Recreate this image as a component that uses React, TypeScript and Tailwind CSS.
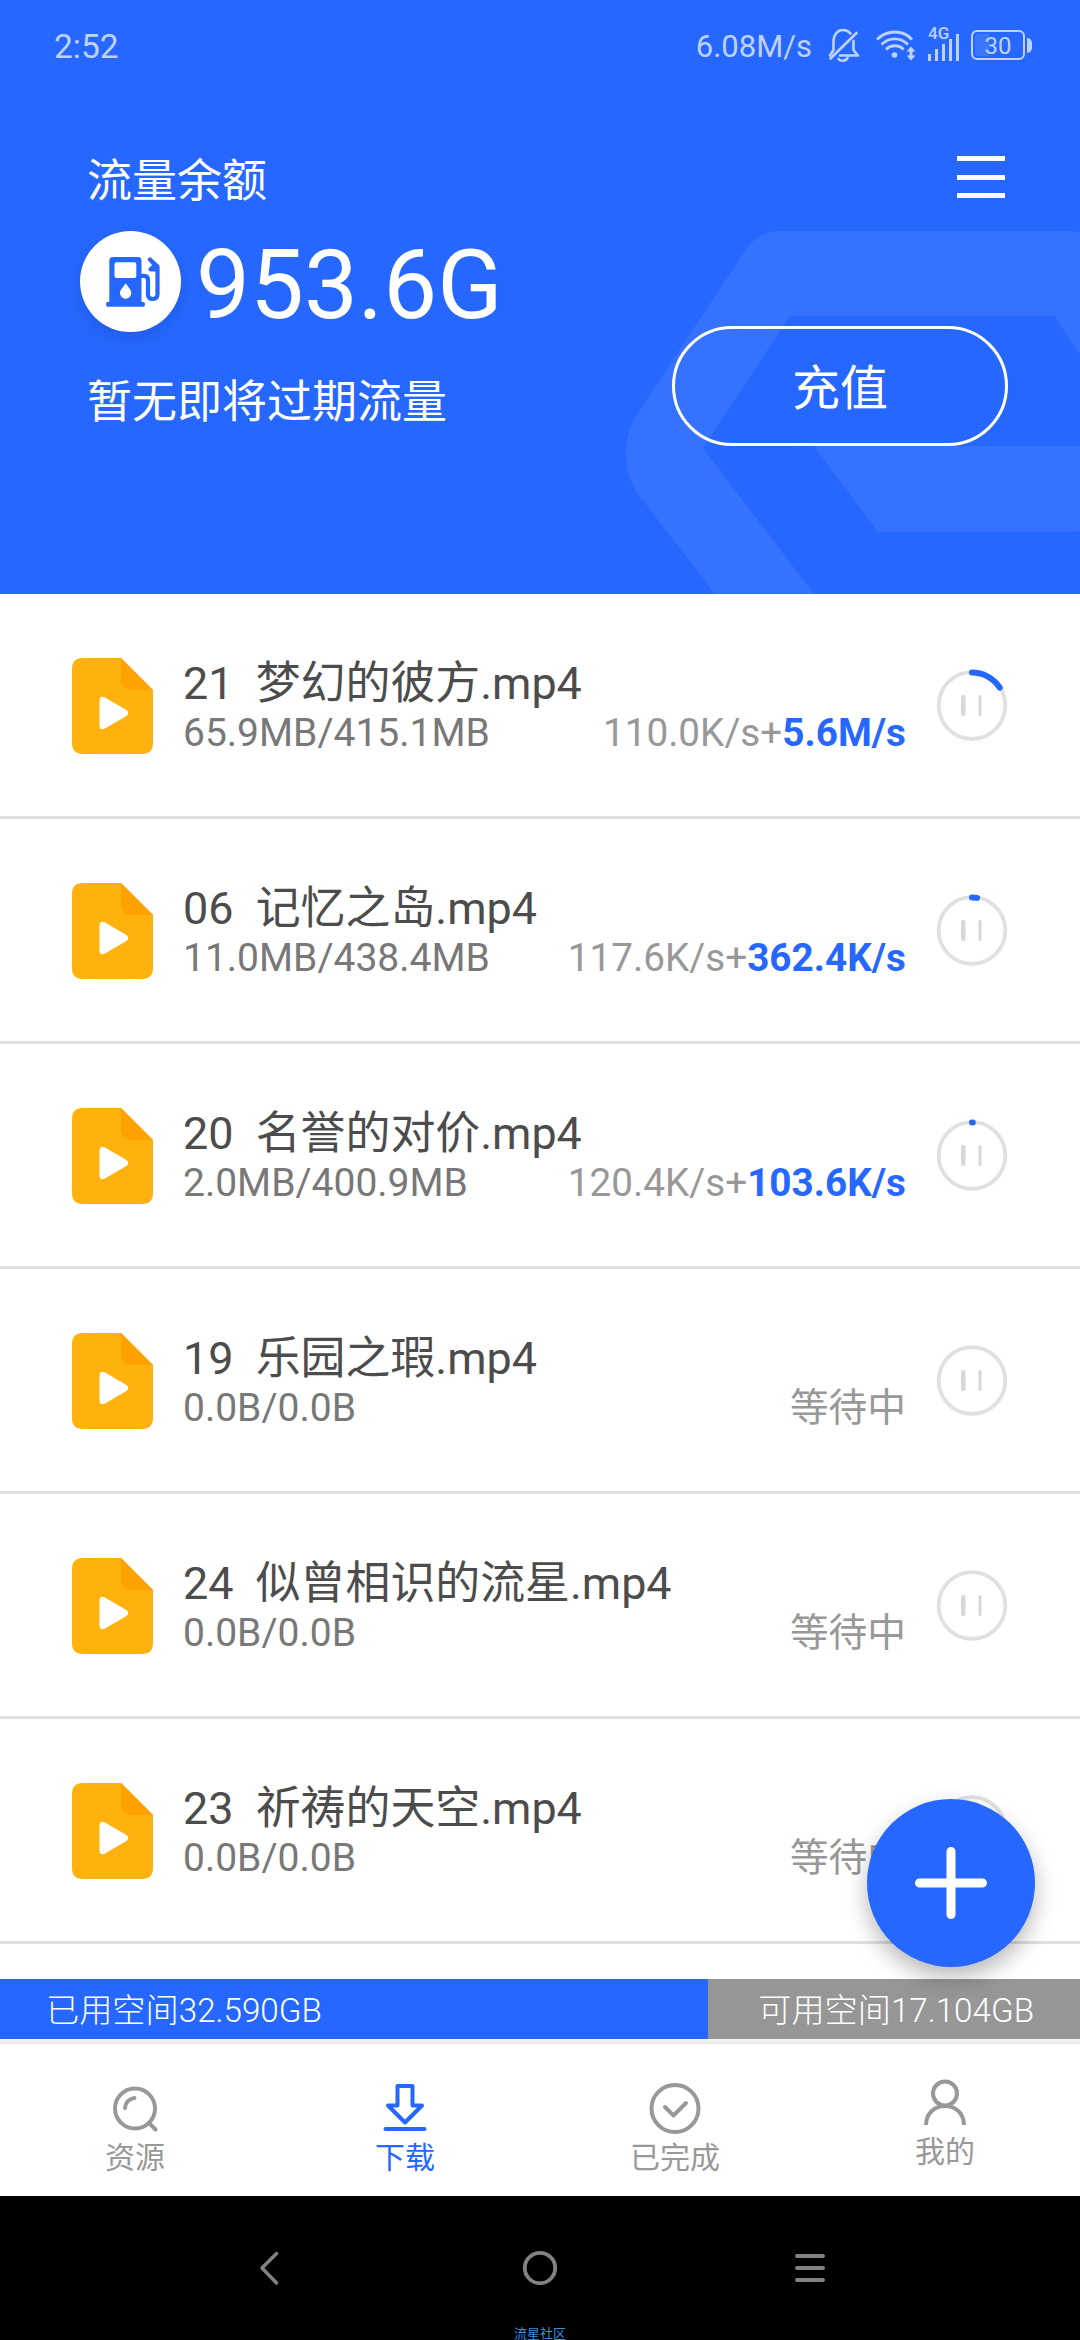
import type { ReactNode } from "react";

type Task = {
  name: string;
  size: string;
  speed?: string;
  boost?: string;
  progress: number;
};

const tasks: Task[] = [
  { name: "21  梦幻的彼方.mp4", size: "65.9MB/415.1MB", speed: "110.0K/s", boost: "5.6M/s", progress: 0.159 },
  { name: "06  记忆之岛.mp4", size: "11.0MB/438.4MB", speed: "117.6K/s", boost: "362.4K/s", progress: 0.025 },
  { name: "20  名誉的对价.mp4", size: "2.0MB/400.9MB", speed: "120.4K/s", boost: "103.6K/s", progress: 0.004 },
  { name: "19  乐园之瑕.mp4", size: "0.0B/0.0B", progress: 0 },
  { name: "24  似曾相识的流星.mp4", size: "0.0B/0.0B", progress: 0 },
  { name: "23  祈祷的天空.mp4", size: "0.0B/0.0B", progress: 0 },
];

function StatusBar() {
  return (
    <div className="flex h-[90px] items-center justify-between pl-[54px] pr-[48px] text-[#bfd2ff]">
      <span className="pt-[3px] text-[33.500px] leading-none">2:52</span>
      <div className="flex h-full items-center">
        <span className="pt-[3px] text-[31px] leading-none">6.08M/s</span>
        <svg className="ml-[15px]" width="34" height="36" viewBox="0 0 34 36" fill="none" stroke="currentColor" strokeWidth="2.6" strokeLinecap="round" strokeLinejoin="round">
          <path d="M3 28.500L6.500 23V13.500C7 7 11 3 16 3C19 3 21.500 4.200 23.500 6.500M26.500 14V23L31 28.500H13" />
          <path d="M3.500 31.500L29.500 6" />
          <path d="M11.500 32C13.500 34.500 18.500 34.500 20.500 31" />
        </svg>
        <svg className="ml-[14px]" width="42" height="34" viewBox="0 0 42 34" fill="none" stroke="currentColor" strokeWidth="2.8">
          <path d="M2 11.500C12 1.500 28 1.500 37 11.500" />
          <path d="M6.500 16.500C14 9 25.500 9 33 16.500" />
          <path d="M11 21.500C16 16.500 24 16.500 28.500 21.500" />
          <circle cx="19.500" cy="27" r="2.800" fill="currentColor" stroke="none" />
          <path d="M36 18.500L40.500 23.500H37.500V27.500H40.500L36 32.500L31.500 27.500H34.500V23.500H31.500Z" fill="currentColor" stroke="none" />
        </svg>
        <div className="relative ml-[11px] h-[36px] w-[34px]">
          <span className="absolute left-0 -top-[2px] text-[17px] font-medium leading-[17px]">4G</span>
          <svg className="absolute left-0 top-0" width="34" height="36" viewBox="0 0 34 36" fill="currentColor">
            <rect x="0" y="27" width="3" height="7" />
            <rect x="7" y="22" width="3" height="12" />
            <rect x="14" y="17" width="3" height="17" />
            <rect x="21" y="12" width="3" height="22" />
            <rect x="28" y="7" width="3" height="27" />
          </svg>
        </div>
        <div className="ml-[9px] flex h-[30px] w-[54px] rounded-[6px] border-2 border-current p-[2px]">
          <div className="flex h-full w-full items-center justify-center rounded-[3px] bg-linear-to-r from-white/10 from-30% to-transparent to-30% pt-px text-[24px] leading-none">
            30
          </div>
        </div>
        <div className="ml-[2px] h-[15px] w-[5px] rounded-r-full bg-current" />
      </div>
    </div>
  );
}

function HeaderBackdrop() {
  return (
    <svg className="absolute left-0 top-0" width="1080" height="594" viewBox="0 0 1080 594">
      <path
        fill="#3472ff"
        fillRule="evenodd"
        d="M778 231H1070Q1075 231 1080 232.500V355L1054 316H790L703 448L814 594H715L638 494C622 473 622 436 636 416L742 255C751 240 764 231 778 231Z"
      />
      <path fill="#3472ff" d="M814 446H1080V531.500L878 532Z" />
    </svg>
  );
}

function Header() {
  return (
    <header className="relative h-[594px] overflow-hidden bg-[#2668ff] text-white">
      <HeaderBackdrop />
      <div className="relative">
        <StatusBar />
        <div className="flex items-start justify-between pl-[87px] pr-[75px] pt-[60px]">
          <div>
            <h1 className="text-[45px] leading-[64px]">流量余额</h1>
            <div className="-ml-[7px] mt-[17px] flex h-[101px] items-center">
              <div className="flex size-[101px] items-center justify-center rounded-full bg-white shadow-[0_6px_20px_rgba(0,0,60,0.13)]">
                <FuelIcon />
              </div>
              <span className="ml-[15px] pt-[6px] text-[96px] leading-[96px]">953.6G</span>
            </div>
            <p className="mt-[37px] text-[45px] leading-[68px]">暂无即将过期流量</p>
          </div>
          <div className="flex flex-col items-end">
            <div className="mt-[6px] flex h-[42px] flex-col justify-between">
              <div className="h-[5px] w-[48px] bg-white" />
              <div className="h-[5px] w-[48px] bg-white" />
              <div className="h-[5px] w-[48px] bg-white" />
            </div>
            <button className="-mr-[3px] mt-[128px] h-[120px] w-[336px] rounded-full border-[3px] border-white pt-[5px] text-[48px] leading-none">
              充值
            </button>
          </div>
        </div>
      </div>
    </header>
  );
}

function FuelIcon() {
  return (
    <svg className="ml-[4px]" width="54" height="50" viewBox="0 0 54 50" fill="#2668ff">
      <path
        fillRule="evenodd"
        d="M7 0H32Q35.500 0 35.500 3.500V45H37.500Q39 45 39 47.300T37.500 49.700H1.500Q0 49.700 0 47.300T1.500 45H3.300V3.500Q3.300 0 7 0ZM10.500 5.300Q8.500 5.300 8.500 7.300V19Q8.500 21 10.500 21H28.300Q30.300 21 30.300 19V7.300Q30.300 5.300 28.300 5.300ZM19.700 26.300C17 30.500 14 33 14 36A5.600 5.600 0 0 0 25.300 36C25.300 33 22.500 30.500 19.700 26.300Z"
      />
      <path
        d="M35.500 18.800H38Q42 18.800 42 23V37.500Q42 42 46.500 42T51.500 37.500V9.500L44 2.500"
        fill="none"
        stroke="#2668ff"
        strokeWidth="4.200"
        strokeLinecap="round"
        strokeLinejoin="round"
      />
      <path d="M43 4L52 7V14.500H44.500Q42.500 14.500 42.500 12.500V11.500L46 8Z" />
    </svg>
  );
}

function VideoFileIcon() {
  return (
    <svg className="mt-[2px]" width="81" height="96" viewBox="0 0 81 96">
      <path fill="#ffb20d" d="M11 0H49L81 32V85Q81 96 70 96H11Q0 96 0 85V11Q0 0 11 0Z" />
      <path fill="#ffa200" d="M49 0L81 32H61Q49 32 49 21Z" />
      <path fill="#fff" d="M27.500 43Q27.500 37 33 39.500L54.500 52Q58 55 54.500 58L33 70.500Q27.500 73 27.500 67Z" />
    </svg>
  );
}

function PauseRing({ progress }: { progress: number }) {
  const length = 2 * Math.PI * 33;

  return (
    <svg className="overflow-visible" width="70" height="71" viewBox="0 0 70 71" fill="none">
      <circle cx="35" cy="35.500" r="33.300" stroke="#e0e0e0" strokeWidth="3.800" />
      <rect x="24" y="25" width="4.500" height="21" rx="2" fill="#d8d8d8" />
      <rect x="41.500" y="25" width="3" height="21" rx="1.500" fill="#d8d8d8" />
      {progress > 0 && (
        <circle
          cx="35"
          cy="35.500"
          r="33"
          stroke="#2668ff"
          strokeWidth="6"
          strokeLinecap="round"
          strokeDasharray={`${progress * length} ${length}`}
          transform="rotate(-90 35 35.500)"
        />
      )}
    </svg>
  );
}

function TaskRow({ task }: { task: Task }) {
  return (
    <li className="flex h-[225px] items-center border-b-[3px] border-[#e0e0e0] pl-[72px] pr-[73px]">
      <VideoFileIcon />
      <div className="ml-[30px] flex-1 pt-[6px]">
        <div className="whitespace-pre text-[44.900px] leading-[50px] text-[#4c4c4c]">{task.name}</div>
        <div className="flex items-center justify-between leading-[48px]">
          <span className="text-[39px] text-[#787878]">{task.size}</span>
          <span className="text-[38.700px] text-[#989898]">
            {task.boost ? (
              <>
                {task.speed}+<b className="font-bold text-[#2668ff]">{task.boost}</b>
              </>
            ) : (
              "等待中"
            )}
          </span>
        </div>
      </div>
      <div className="ml-[31px]">
        <PauseRing progress={task.progress} />
      </div>
    </li>
  );
}

function StorageBar() {
  return (
    <div className="flex h-[60px] items-center bg-[#969696] text-[33.200px] font-light text-white">
      <div className="flex h-full w-[708px] items-center bg-[#2668ff] pl-[46px] pt-[4px]">已用空间32.590GB</div>
      <div className="flex-1 pr-[46px] pt-[4px] text-right">可用空间17.104GB</div>
    </div>
  );
}

function Tab({ label, active, children }: { label: string; active?: boolean; children: ReactNode }) {
  return (
    <div className={active ? "flex flex-1 flex-col items-center text-[#2668ff]" : "flex flex-1 flex-col items-center text-[#989898]"}>
      {children}
      <span className="text-[30px] leading-[44px]">{label}</span>
    </div>
  );
}

function TabBar() {
  return (
    <nav className="flex h-[152px] bg-white pt-[37px]">
      <Tab label="资源">
        <svg className="mb-px" width="52" height="54" viewBox="0 0 52 54" fill="none" stroke="currentColor" strokeWidth="4" strokeLinecap="round">
          <circle cx="26" cy="27.500" r="20" />
          <path d="M40 42L46.500 48.500M16 27A10.500 10.500 0 0 1 25.500 17" />
        </svg>
      </Tab>
      <Tab label="下载" active>
        <svg className="mb-px" width="52" height="54" viewBox="0 0 52 54" fill="none" stroke="currentColor" strokeWidth="4" strokeLinecap="round" strokeLinejoin="round">
          <path d="M18.500 5H33.500V24.500H43L26 41.500L9 24.500H18.500Z" />
          <path d="M6.500 48H45.500" />
        </svg>
      </Tab>
      <Tab label="已完成">
        <svg className="mb-px" width="52" height="54" viewBox="0 0 52 54" fill="none" stroke="currentColor" strokeWidth="4" strokeLinecap="round" strokeLinejoin="round">
          <circle cx="26" cy="27.500" r="23.500" />
          <path d="M16 26L24.500 34.500L37 22" />
        </svg>
      </Tab>
      <Tab label="我的">
        <svg className="-mb-[5px] overflow-visible" width="52" height="54" viewBox="0 0 52 54" fill="none" stroke="currentColor" strokeWidth="4">
          <circle cx="26" cy="12.500" r="12" />
          <path d="M7 44C7 32 16 25 26 25S45 32 45 44" />
        </svg>
      </Tab>
    </nav>
  );
}

function SystemNav() {
  return (
    <div className="relative flex h-[144px] justify-center bg-black pt-[54px]">
      <div className="flex w-[576px] items-start justify-between">
        <svg width="36" height="36" viewBox="0 0 36 36" fill="none" stroke="#828282" strokeWidth="3.500" strokeLinecap="round" strokeLinejoin="round">
          <path d="M24.500 3.500L10 18L24.500 33" />
        </svg>
        <svg width="36" height="36" viewBox="0 0 36 36" fill="none" stroke="#828282" strokeWidth="3.800">
          <circle cx="18" cy="18" r="15.200" />
        </svg>
        <svg width="36" height="36" viewBox="0 0 36 36" fill="none" stroke="#828282" strokeWidth="4" strokeLinecap="round">
          <path d="M5 6H31M5 18H31M5 30H31" />
        </svg>
      </div>
      <span className="absolute inset-x-0 bottom-0 text-center text-[13px] leading-[13px] text-[#3a8fe0]">流星社区</span>
    </div>
  );
}

export default function App() {
  return (
    <div className="relative flex h-[2340px] w-[1080px] flex-col overflow-hidden bg-white font-[Roboto,'Noto_Sans_CJK_SC',sans-serif]">
      <Header />
      <ul className="h-[1385px] overflow-hidden">
        {tasks.map((task) => (
          <TaskRow key={task.name} task={task} />
        ))}
      </ul>
      <StorageBar />
      <div className="h-[5px] bg-linear-to-b from-[#f7f7f7] to-[#e6e6e6]" />
      <TabBar />
      <SystemNav />

      <button className="absolute left-[867px] top-[1799px] flex size-[168px] items-center justify-center rounded-full bg-[#2668ff] shadow-[0_10px_22px_rgba(0,0,0,0.28)]">
        <svg width="72" height="72" viewBox="0 0 72 72" stroke="#fff" strokeWidth="9" strokeLinecap="round">
          <path d="M36 4.500V67.500M4.500 36H67.500" />
        </svg>
      </button>
    </div>
  );
}
